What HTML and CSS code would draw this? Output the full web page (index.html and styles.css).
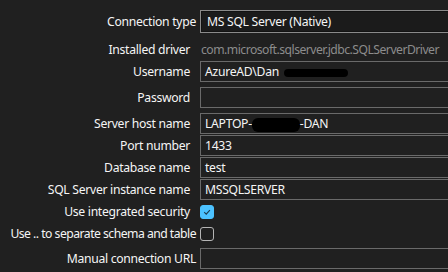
FILE: index.html
```html
<!DOCTYPE html>
<html lang="en">

<head>
  <title>connection settings</title>
  <meta charset="UTF-8" />
  <link rel="stylesheet" href="styles.css">
</head>

<body>
  <div class="form">
    <div class="row row-combo">
      <label class="label tight">Connection type</label>
      <div class="combo">MS SQL Server (Native)</div>
    </div>
    <div class="row row-driver">
      <label class="label">Installed driver</label>
      <div class="driver">com.microsoft.sqlserver.jdbc.SQLServerDriver</div>
    </div>
    <div class="row">
      <label class="label">Username</label>
      <div class="field">AzureAD\Dan<span class="redact redact-user"></span></div>
    </div>
    <div class="row gap">
      <label class="label">Password</label>
      <div class="field"></div>
    </div>
    <div class="row gap">
      <label class="label">Server host name</label>
      <div class="field">LAPTOP-<span class="redact redact-host"></span>-DAN</div>
    </div>
    <div class="row">
      <label class="label">Port number</label>
      <div class="field">1433</div>
    </div>
    <div class="row">
      <label class="label">Database name</label>
      <div class="field">test</div>
    </div>
    <div class="row">
      <label class="label">SQL Server instance name</label>
      <div class="field">MSSQLSERVER</div>
    </div>
    <div class="row">
      <label class="label">Use integrated security</label>
      <span class="check checked">
        <svg width="10" height="10" viewBox="0 0 10 10"><path d="M2.2 5.2 L4.2 7.1 L7.9 3.2" fill="none" stroke="#1b3a4d" stroke-width="1.1"/></svg>
      </span>
    </div>
    <div class="row">
      <label class="label tight long">Use .. to separate schema and table</label>
      <span class="check"></span>
    </div>
    <div class="row row-url">
      <label class="label tight">Manual connection URL</label>
      <div class="field"></div>
    </div>
  </div>
</body>

</html>
```

FILE: styles.css
```css
body {
  margin: 0;
  background-color: #202020;
  color: #f5f5f5;
  font-family: 'Noto Sans', sans-serif;
  font-size: 12.2px;
  letter-spacing: -0.3px;
  overflow: hidden;
}

.form {
  display: flex;
  flex-direction: column;
  gap: 1px;
  padding-top: 10px;
}

.row {
  display: flex;
  align-items: center;
  height: 21px;
}

.row.gap {
  margin-top: 4px;
}

.row-combo {
  height: 23px;
}

.row-driver {
  height: 22px;
  margin-top: 4px;
}

.row-url {
  margin-top: 3px;
}

.label {
  width: 200px;
  flex: none;
  text-align: right;
  padding-right: 10px;
  box-sizing: border-box;
  white-space: nowrap;
}

.label.tight {
  padding-right: 4px;
}

.label.long {
  letter-spacing: -0.52px;
}

.combo {
  flex: none;
  width: 260px;
  height: 23px;
  box-sizing: border-box;
  border: 1px solid #8a8a8a;
  box-shadow: inset 0 0 0 1px #121212;
  background-color: #1b1b1b;
  padding-left: 6px;
  line-height: 21px;
}

.driver {
  color: #8c8c8c;
  padding-left: 1px;
  letter-spacing: -0.52px;
  white-space: nowrap;
}

.field {
  flex: none;
  width: 260px;
  height: 21px;
  box-sizing: border-box;
  border: 1px solid #6a6a6a;
  padding-left: 4px;
  line-height: 19px;
  white-space: nowrap;
}

.redact {
  display: inline-block;
  background-color: #000;
  vertical-align: middle;
  border-radius: 6px;
}

.redact-user {
  width: 64px;
  height: 8px;
  margin-left: 5px;
}

.redact-host {
  width: 48px;
  height: 14px;
}

.check {
  width: 14px;
  height: 14px;
  box-sizing: border-box;
  border: 1px solid #b5b5b5;
  border-radius: 3px;
  display: flex;
  align-items: center;
  justify-content: center;
}

.check.checked {
  background-color: #4cc2ff;
  border-color: #4cc2ff;
}
```
